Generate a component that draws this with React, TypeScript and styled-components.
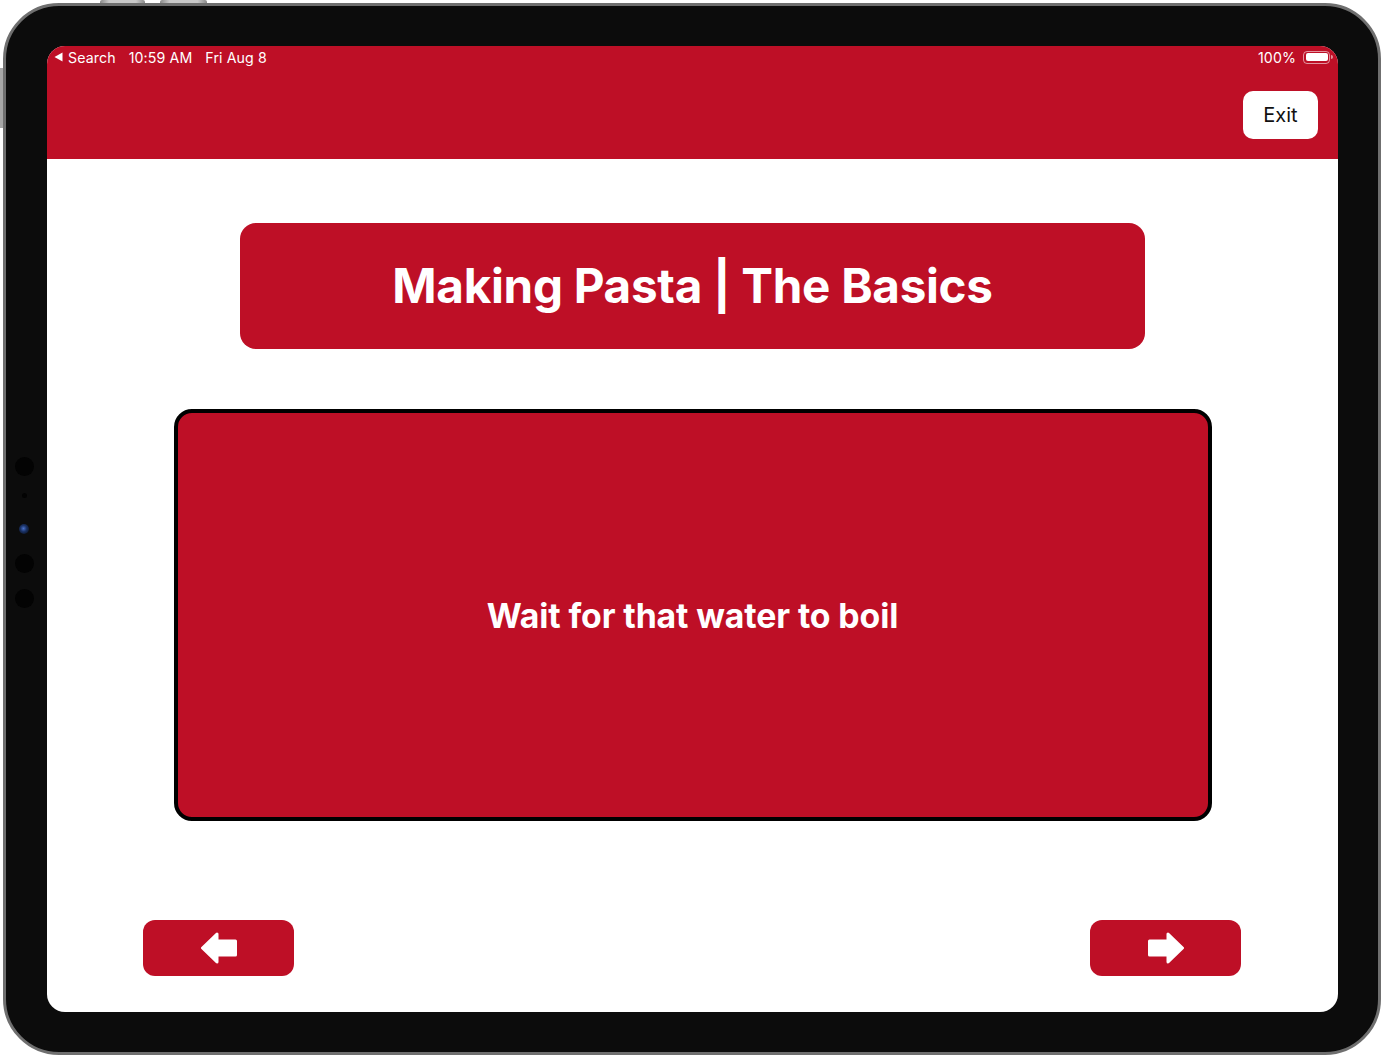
import React from "react";
import styled, { createGlobalStyle } from "styled-components";

const RED = "#be0f26";

const Global = createGlobalStyle`
  html, body { margin: 0; padding: 0; background: #ffffff; }
  body { font-family: Inter, "Noto Sans", "Liberation Sans", sans-serif; }
  * { box-sizing: border-box; }
`;

const Page = styled.div`
  width: 1381px;
  height: 1057px;
  padding: 3px 0 2px 3px;
  background: #ffffff;
  overflow: hidden;
`;

const Device = styled.div`
  position: relative;
  width: 1378px;
  height: 1052px;
  border: 3px solid #6f6f6f;
  border-radius: 56px;
  background: #0c0c0c;
  padding: 40px 40px 40px 41px;
`;

const TopKey = styled.div<{ $left: number; $width: number }>`
  position: absolute;
  top: -6px;
  left: ${(p) => p.$left}px;
  width: ${(p) => p.$width}px;
  height: 3px;
  border-radius: 2px 2px 0 0;
  background: linear-gradient(90deg, #8a8a8a, #c9c9c9 20%, #c9c9c9 80%, #8a8a8a);
`;

const SideKey = styled.div`
  position: absolute;
  left: -6px;
  top: 62px;
  width: 3px;
  height: 60px;
  background: #a8a8a8;
`;

const Sensor = styled.div<{ $size: number; $cy: number; $blue?: boolean }>`
  position: absolute;
  left: ${(p) => 18 - p.$size / 2}px;
  top: ${(p) => p.$cy - 6 - p.$size / 2}px;
  width: ${(p) => p.$size}px;
  height: ${(p) => p.$size}px;
  border-radius: 50%;
  background: ${(p) =>
    p.$blue ? "radial-gradient(circle at 45% 45%, #4a70c8 0%, #1a3266 40%, #060606 100%)" : "#030303"};
`;

const Screen = styled.div`
  width: 100%;
  height: 100%;
  border-radius: 18px;
  overflow: hidden;
  background: #ffffff;
  display: flex;
  flex-direction: column;
`;

const Header = styled.header`
  height: 113px;
  background: ${RED};
  display: flex;
  flex-direction: column;
  flex-shrink: 0;
`;

const StatusBar = styled.div`
  height: 22px;
  padding: 0 8px 0 7px;
  display: flex;
  align-items: center;
  justify-content: space-between;
  color: #ffffff;
  font-size: 14.2px;
  letter-spacing: 0.1px;
`;

const StatusGroup = styled.div`
  display: flex;
  align-items: center;
  gap: 13px;
`;

const BackLink = styled.span`
  display: flex;
  align-items: center;
  gap: 5px;
`;

const Battery = styled.div`
  display: flex;
  align-items: center;
  gap: 7px;
`;

const BatteryBody = styled.div`
  position: relative;
  width: 27px;
  height: 13px;
  border: 1px solid rgba(255, 255, 255, 0.55);
  border-radius: 4px;
  padding: 1.5px;
  &::after {
    content: "";
    position: absolute;
    right: -4px;
    top: 3.5px;
    width: 2px;
    height: 4px;
    border-radius: 0 2px 2px 0;
    background: rgba(255, 255, 255, 0.55);
  }
`;

const BatteryFill = styled.div`
  width: 100%;
  height: 100%;
  border-radius: 2px;
  background: #ffffff;
`;

const HeaderActions = styled.div`
  flex: 1;
  display: flex;
  justify-content: flex-end;
  padding: 23px 20px 0 0;
`;

const ExitButton = styled.button`
  width: 75px;
  height: 48px;
  border: none;
  border-radius: 10px;
  background: #ffffff;
  color: #111111;
  font-family: Inter, "Noto Sans", sans-serif;
  font-size: 20px;
  cursor: pointer;
`;

const Content = styled.main`
  flex: 1;
  display: flex;
  flex-direction: column;
  align-items: center;
  padding-top: 64px;
`;

const TitleBox = styled.div`
  width: 905px;
  height: 126px;
  border-radius: 16px;
  background: ${RED};
  display: flex;
  align-items: center;
  justify-content: center;
  color: #ffffff;
  font-size: 47.6px;
  font-weight: 700;
  letter-spacing: -0.3px;
  padding-bottom: 2px;
`;

const Card = styled.div`
  margin-top: 60px;
  width: 1038px;
  height: 412px;
  border: 4px solid #000000;
  border-radius: 18px;
  background: ${RED};
  display: flex;
  align-items: center;
  justify-content: center;
  color: #ffffff;
  font-size: 33.8px;
  font-weight: 700;
  letter-spacing: -0.1px;
`;

const NavRow = styled.div`
  margin-top: 99px;
  width: 100%;
  padding: 0 97px 0 96px;
  display: flex;
  justify-content: space-between;
`;

const NavButton = styled.button`
  width: 151px;
  height: 56px;
  border: none;
  border-radius: 12px;
  background: ${RED};
  display: flex;
  align-items: center;
  justify-content: center;
  cursor: pointer;
  padding: 0;
`;

const Arrow = ({ dir }: { dir: "left" | "right" }) => (
  <svg
    width="38"
    height="32"
    viewBox="0 0 38 32"
    style={dir === "right" ? { transform: "scaleX(-1)" } : undefined}
  >
    <path
      d="M2.5 16 L17 2 L17 9 L35.5 9 L35.5 23 L17 23 L17 30 Z"
      fill="#ffffff"
      stroke="#ffffff"
      strokeWidth="3"
      strokeLinejoin="round"
    />
  </svg>
);

export default function App() {
  return (
    <>
      <Global />
      <Page>
        <Device>
          <TopKey $left={94} $width={45} />
          <TopKey $left={154} $width={47} />
          <SideKey />
          <Sensor $size={19} $cy={466} />
          <Sensor $size={5} $cy={495} />
          <Sensor $size={10} $cy={529} $blue />
          <Sensor $size={19} $cy={563} />
          <Sensor $size={19} $cy={598} />
          <Screen>
            <Header>
              <StatusBar>
                <StatusGroup>
                  <BackLink>
                    <svg width="9" height="10" viewBox="0 0 9 10">
                      <path d="M0.5 5 L8.5 0.5 L8.5 9.5 Z" fill="#ffffff" />
                    </svg>
                    Search
                  </BackLink>
                  <span>10:59 AM</span>
                  <span>Fri Aug 8</span>
                </StatusGroup>
                <Battery>
                  <span>100%</span>
                  <BatteryBody>
                    <BatteryFill />
                  </BatteryBody>
                </Battery>
              </StatusBar>
              <HeaderActions>
                <ExitButton>Exit</ExitButton>
              </HeaderActions>
            </Header>
            <Content>
              <TitleBox>Making Pasta | The Basics</TitleBox>
              <Card>Wait for that water to boil</Card>
              <NavRow>
                <NavButton aria-label="Previous">
                  <Arrow dir="left" />
                </NavButton>
                <NavButton aria-label="Next">
                  <Arrow dir="right" />
                </NavButton>
              </NavRow>
            </Content>
          </Screen>
        </Device>
      </Page>
    </>
  );
}
